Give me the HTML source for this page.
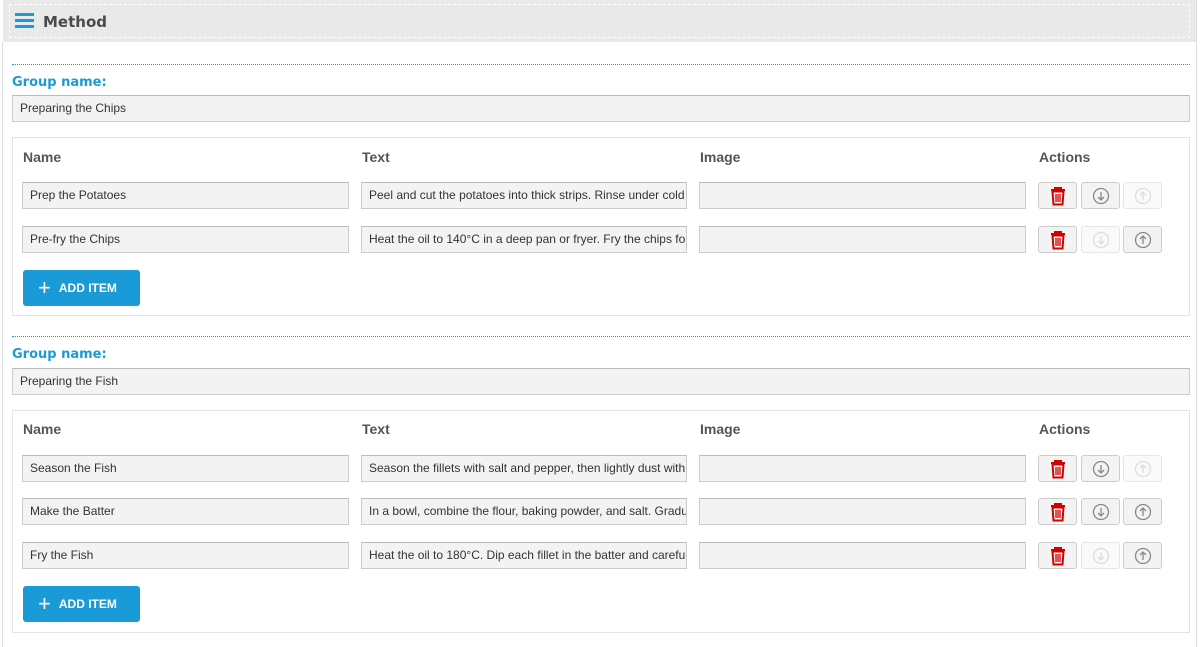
<!DOCTYPE html>
<html><head><meta charset="utf-8"><style>
*{box-sizing:border-box;margin:0;padding:0}
body{width:1200px;height:647px;background:#fff;font-family:"Liberation Sans",Arial,sans-serif;position:relative;overflow:hidden;color:#333}
.a{position:absolute}
.hdr{left:3px;top:0;width:1193px;height:42px;background:#e9e9e9}
.hdr .d{position:absolute;left:6px;top:4px;right:6px;bottom:4px;border:1px dashed #fff}
.hdr .t{position:absolute;left:40px;top:13px;font-size:15px;font-weight:bold;color:#4a4a4a;font-family:"DejaVu Sans",sans-serif}
.vl{left:2px;top:42px;width:1px;height:605px;background:#ddd}
.vr{left:1196px;top:0;width:1px;height:647px;background:#ddd}
.dot{left:12px;width:1178px;height:1px;border-top:1px dotted #1a9bd7}
.lbl{left:12px;font-size:13px;font-weight:bold;color:#1a9bd7;font-family:"DejaVu Sans",sans-serif}
.in{background:#f3f3f3;border:1px solid #ccc;border-top-color:#bbb;font-size:12px;color:#333;padding:0 7px;line-height:25px;white-space:nowrap;overflow:hidden;height:27px}
.box{left:12px;width:1178px;border:1px solid #e4e4e4}
.th{font-size:14px;font-weight:bold;color:#555}
.btn{width:39px;height:27px;border:1px solid #ccc;border-radius:3px;background:#f3f3f3;display:flex;align-items:center;justify-content:center}
.btn.dis{background:#fafafa;border-color:#e6e6e6}
.add{width:117px;height:36px;background:#1a9bd7;border-radius:3px;color:#fff;font-size:12px;font-weight:bold;display:flex;align-items:center;padding-left:15px}
.add span{font-size:22px;font-weight:normal;margin-right:8px;line-height:20px}
</style></head><body>
<div class="a hdr"><div class="d"></div>
<svg class="a" style="left:12px;top:13px" width="20" height="15"><rect y="0" width="19" height="3" fill="#1a9bd7"/><rect y="6" width="19" height="3" fill="#1a9bd7"/><rect y="12" width="19" height="3" fill="#1a9bd7"/></svg>
<div class="t">Method</div></div>
<div class="a vl"></div><div class="a vr"></div>

<svg width="0" height="0" style="position:absolute"><defs>
<g id="tr"><path d="M2 4h14M6 4V2h6v2" stroke="#d40000" stroke-width="2" fill="none"/><path d="M3.5 5.5h11l-1 13h-9z" stroke="#d40000" stroke-width="2" fill="none"/><path d="M7 8v8M9 8v8M11 8v8" stroke="#d40000" stroke-width="1.3"/></g>
</defs></svg>

<!-- Group 1 -->
<div class="a dot" style="top:64px"></div>
<div class="a lbl" style="top:75px">Group name:</div>
<div class="a in" style="left:12px;top:95px;width:1178px">Preparing the Chips</div>
<div class="a box" style="top:137px;height:179px"></div>
<div class="a th" style="left:23px;top:149px">Name</div>
<div class="a th" style="left:362px;top:149px">Text</div>
<div class="a th" style="left:700px;top:149px">Image</div>
<div class="a th" style="left:1039px;top:149px">Actions</div>

<div class="a in" style="left:22px;top:182px;width:327px">Prep the Potatoes</div>
<div class="a in" style="left:361px;top:182px;width:326px">Peel and cut the potatoes into thick strips. Rinse under cold water</div>
<div class="a in" style="left:699px;top:182px;width:327px"></div>
<div class="a btn" style="left:1038px;top:182px"><svg width="18" height="20"><use href="#tr"/></svg></div>
<div class="a btn" style="left:1081px;top:182px"><svg width="18" height="18"><circle cx="9" cy="9" r="7.5" stroke="#888" stroke-width="1.3" fill="none"/><path d="M9 5v8M6 10l3 3 3-3" stroke="#888" stroke-width="1.3" fill="none"/></svg></div>
<div class="a btn dis" style="left:1123px;top:182px"><svg width="18" height="18"><circle cx="9" cy="9" r="7.5" stroke="#ddd" stroke-width="1.3" fill="none"/><path d="M9 13V5M6 8l3-3 3 3" stroke="#ddd" stroke-width="1.3" fill="none"/></svg></div>

<div class="a in" style="left:22px;top:226px;width:327px">Pre-fry the Chips</div>
<div class="a in" style="left:361px;top:226px;width:326px">Heat the oil to 140°C in a deep pan or fryer. Fry the chips for 5 minutes</div>
<div class="a in" style="left:699px;top:226px;width:327px"></div>
<div class="a btn" style="left:1038px;top:226px"><svg width="18" height="20"><use href="#tr"/></svg></div>
<div class="a btn dis" style="left:1081px;top:226px"><svg width="18" height="18"><circle cx="9" cy="9" r="7.5" stroke="#ddd" stroke-width="1.3" fill="none"/><path d="M9 5v8M6 10l3 3 3-3" stroke="#ddd" stroke-width="1.3" fill="none"/></svg></div>
<div class="a btn" style="left:1123px;top:226px"><svg width="18" height="18"><circle cx="9" cy="9" r="7.5" stroke="#888" stroke-width="1.3" fill="none"/><path d="M9 13V5M6 8l3-3 3 3" stroke="#888" stroke-width="1.3" fill="none"/></svg></div>
<div class="a add" style="left:23px;top:270px"><span>+</span>ADD ITEM</div>

<!-- Group 2 -->
<div class="a dot" style="top:336px"></div>
<div class="a lbl" style="top:347px">Group name:</div>
<div class="a in" style="left:12px;top:368px;width:1178px">Preparing the Fish</div>
<div class="a box" style="top:410px;height:223px"></div>
<div class="a th" style="left:23px;top:421px">Name</div>
<div class="a th" style="left:362px;top:421px">Text</div>
<div class="a th" style="left:700px;top:421px">Image</div>
<div class="a th" style="left:1039px;top:421px">Actions</div>

<div class="a in" style="left:22px;top:455px;width:327px">Season the Fish</div>
<div class="a in" style="left:361px;top:455px;width:326px">Season the fillets with salt and pepper, then lightly dust with flour</div>
<div class="a in" style="left:699px;top:455px;width:327px"></div>
<div class="a btn" style="left:1038px;top:455px"><svg width="18" height="20"><use href="#tr"/></svg></div>
<div class="a btn" style="left:1081px;top:455px"><svg width="18" height="18"><circle cx="9" cy="9" r="7.5" stroke="#888" stroke-width="1.3" fill="none"/><path d="M9 5v8M6 10l3 3 3-3" stroke="#888" stroke-width="1.3" fill="none"/></svg></div>
<div class="a btn dis" style="left:1123px;top:455px"><svg width="18" height="18"><circle cx="9" cy="9" r="7.5" stroke="#ddd" stroke-width="1.3" fill="none"/><path d="M9 13V5M6 8l3-3 3 3" stroke="#ddd" stroke-width="1.3" fill="none"/></svg></div>

<div class="a in" style="left:22px;top:498px;width:327px">Make the Batter</div>
<div class="a in" style="left:361px;top:498px;width:326px">In a bowl, combine the flour, baking powder, and salt. Gradually whisk</div>
<div class="a in" style="left:699px;top:498px;width:327px"></div>
<div class="a btn" style="left:1038px;top:498px"><svg width="18" height="20"><use href="#tr"/></svg></div>
<div class="a btn" style="left:1081px;top:498px"><svg width="18" height="18"><circle cx="9" cy="9" r="7.5" stroke="#888" stroke-width="1.3" fill="none"/><path d="M9 5v8M6 10l3 3 3-3" stroke="#888" stroke-width="1.3" fill="none"/></svg></div>
<div class="a btn" style="left:1123px;top:498px"><svg width="18" height="18"><circle cx="9" cy="9" r="7.5" stroke="#888" stroke-width="1.3" fill="none"/><path d="M9 13V5M6 8l3-3 3 3" stroke="#888" stroke-width="1.3" fill="none"/></svg></div>

<div class="a in" style="left:22px;top:542px;width:327px">Fry the Fish</div>
<div class="a in" style="left:361px;top:542px;width:326px">Heat the oil to 180°C. Dip each fillet in the batter and carefully lower</div>
<div class="a in" style="left:699px;top:542px;width:327px"></div>
<div class="a btn" style="left:1038px;top:542px"><svg width="18" height="20"><use href="#tr"/></svg></div>
<div class="a btn dis" style="left:1081px;top:542px"><svg width="18" height="18"><circle cx="9" cy="9" r="7.5" stroke="#ddd" stroke-width="1.3" fill="none"/><path d="M9 5v8M6 10l3 3 3-3" stroke="#ddd" stroke-width="1.3" fill="none"/></svg></div>
<div class="a btn" style="left:1123px;top:542px"><svg width="18" height="18"><circle cx="9" cy="9" r="7.5" stroke="#888" stroke-width="1.3" fill="none"/><path d="M9 13V5M6 8l3-3 3 3" stroke="#888" stroke-width="1.3" fill="none"/></svg></div>
<div class="a add" style="left:23px;top:586px"><span>+</span>ADD ITEM</div>
</body></html>
